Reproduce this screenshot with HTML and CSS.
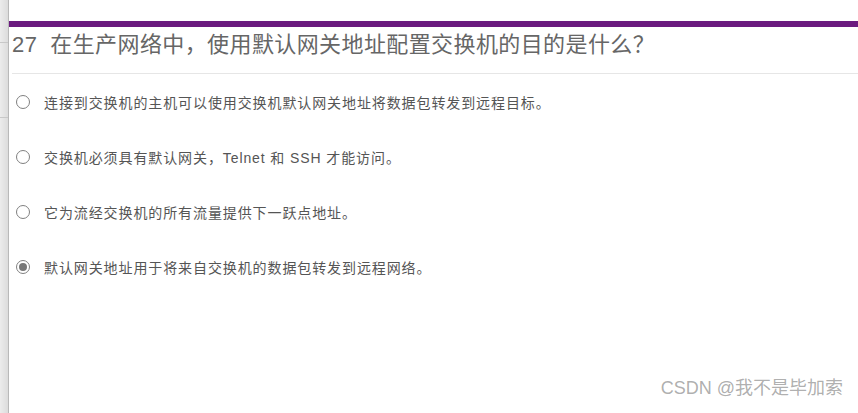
FILE: index.html
```html
<!DOCTYPE html>
<html lang="zh-CN">
<head>
  <meta charset="UTF-8">
  <title>27 交换机默认网关</title>
  <link rel="stylesheet" href="styles.css">
</head>
<body>
  <div class="page">
    <div class="side">
      <div class="side-item first"></div>
      <div class="side-item"></div>
    </div>
    <div class="main">
      <div class="bar"></div>
      <h2 class="question"><span class="num">27</span>在生产网络中，使用默认网关地址配置交换机的目的是什么？</h2>
      <ul class="answers">
        <li><span class="radio"></span>连接到交换机的主机可以使用交换机默认网关地址将数据包转发到远程目标。</li>
        <li><span class="radio"></span>交换机必须具有默认网关，Telnet 和 SSH 才能访问。</li>
        <li><span class="radio"></span>它为流经交换机的所有流量提供下一跃点地址。</li>
        <li><span class="radio checked"></span>默认网关地址用于将来自交换机的数据包转发到远程网络。</li>
      </ul>
    </div>
  </div>
  <div class="watermark">CSDN @我不是毕加索</div>
</body>
</html>
```

FILE: styles.css
```css
body {
  margin: 0;
  background: #fff;
  font-family: "Liberation Sans", "Noto Sans CJK SC", sans-serif;
  overflow: hidden;
}
.page {
  display: flex;
  height: 413px;
}
.side {
  width: 8px;
  background: linear-gradient(to right, #ececec, #dcdcdc);
  border-right: 1px solid #b9b9b9;
}
.side-item {
  height: 42px;
  border-bottom: 1px solid #c8c8c8;
}
.side-item + .side-item {
  height: 74px;
}
.main {
  flex: 1;
  padding-top: 21px;
}
.bar {
  height: 6px;
  background: #6b1a7f;
}
.question {
  margin: 0 0 0 3px;
  padding: 4px 0 14px;
  font-size: 22px;
  letter-spacing: 0.4px;
  font-weight: normal;
  color: #666;
  line-height: 28px;
  border-bottom: 1px solid #e6e6e6;
}
.num {
  margin-right: 13px;
}
.answers {
  list-style: none;
  margin: 0;
  padding: 0 0 0 7px;
}
.answers li {
  display: flex;
  align-items: center;
  height: 55px;
  font-size: 14px;
  letter-spacing: 0.9px;
  color: #555;
}
.radio {
  width: 12px;
  height: 12px;
  border: 1px solid #808080;
  border-radius: 50%;
  margin-right: 14px;
  box-sizing: content-box;
  position: relative;
}
.radio.checked::after {
  content: "";
  position: absolute;
  left: 2px;
  top: 2px;
  width: 8px;
  height: 8px;
  border-radius: 50%;
  background: #777;
}
.watermark {
  position: absolute;
  right: 15px;
  bottom: 14px;
  font-size: 18px;
  color: rgba(130, 130, 130, 0.65);
}
```
